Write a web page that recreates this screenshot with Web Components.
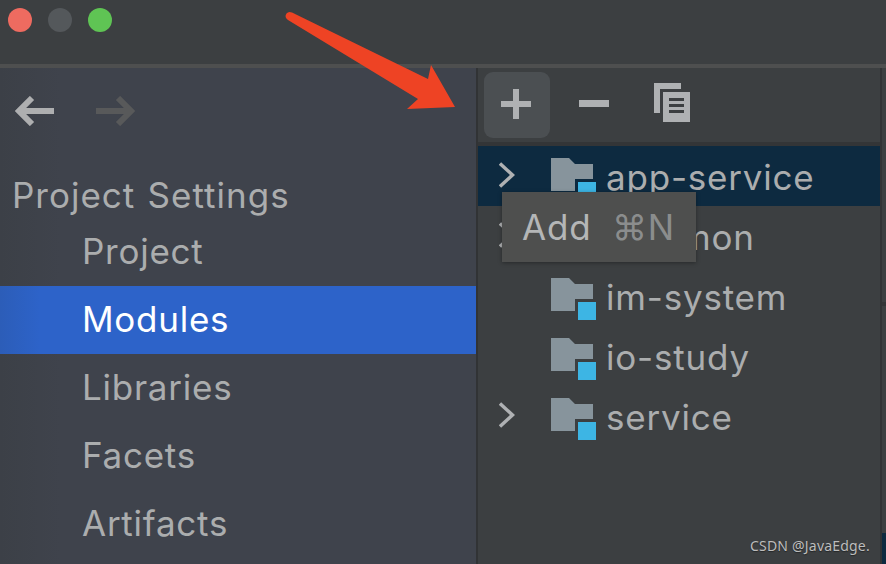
<!DOCTYPE html>
<html>
<head>
<meta charset="utf-8">
<title>Project Structure</title>
<style>
    html, body { margin: 0; height: 100%; background: #3c3f41; overflow: hidden; }
    body { font-family: Inter, "Liberation Sans", sans-serif; }
</style>
</head>
<body>
<ide-window>
    <ide-sidebar slot="side">
        <side-item>Project</side-item>
        <side-item selected>Modules</side-item>
        <side-item>Libraries</side-item>
        <side-item>Facets</side-item>
        <side-item>Artifacts</side-item>
    </ide-sidebar>
    <module-toolbar slot="main"></module-toolbar>
    <module-row slot="main" selected expandable>app-service</module-row>
    <module-row slot="main" expandable>common</module-row>
    <module-row slot="main">im-system</module-row>
    <module-row slot="main">io-study</module-row>
    <module-row slot="main" expandable>service</module-row>
    <hover-tip slot="main" shortcut="⌘N">Add</hover-tip>
    <red-arrow slot="over"></red-arrow>
    <water-mark slot="over">CSDN @JavaEdge.</water-mark>
</ide-window>

<script>
class IdeWindow extends HTMLElement {
    constructor() {
        super();
        this.attachShadow({ mode: 'open' });
        this.shadowRoot.innerHTML = `
            <style>
                :host {
                    display: flex;
                    flex-direction: column;
                    position: relative;
                    width: 886px;
                    height: 564px;
                    overflow: hidden;
                    background: #3c3f41;
                }
                .titlebar {
                    height: 64px;
                    flex: none;
                    box-sizing: border-box;
                    padding: 8px 8px;
                    display: flex;
                    gap: 16px;
                }
                .light { width: 24px; height: 24px; border-radius: 50%; }
                .red { background: #ee6b60; }
                .grey { background: #54585b; }
                .green { background: #5fc454; }
                .rule { height: 4px; flex: none; background: #4e4f4f; }
                .body { flex: 1; display: flex; min-height: 0; }
                .main {
                    flex: none;
                    width: 402px;
                    border-left: 2px solid #313335;
                    border-right: 2px solid #313335;
                    display: flex;
                    flex-direction: column;
                    position: relative;
                }
                .strip { flex: 1; display: flex; flex-direction: column; }
                .strip .a { height: 234px; flex: none; }
                .strip .b { height: 4px; flex: none; background: #333537; }
                .strip .c { height: 227px; flex: none; }
                .strip .d { flex: 1; background: #0d2a40; }
            </style>
            <div class="titlebar">
                <div class="light red"></div>
                <div class="light grey"></div>
                <div class="light green"></div>
            </div>
            <div class="rule"></div>
            <div class="body">
                <slot name="side"></slot>
                <div class="main"><slot name="main"></slot></div>
                <div class="strip">
                    <div class="a"></div><div class="b"></div><div class="c"></div><div class="d"></div>
                </div>
            </div>
            <slot name="over"></slot>
        `;
    }
}

class IdeSidebar extends HTMLElement {
    constructor() {
        super();
        this.attachShadow({ mode: 'open' });
        this.shadowRoot.innerHTML = `
            <style>
                :host {
                    display: flex;
                    flex-direction: column;
                    flex: none;
                    width: 476px;
                    background: linear-gradient(90deg, #3c4047 0, #3f434c 60px);
                }
                .nav {
                    height: 84px;
                    flex: none;
                    display: flex;
                    gap: 42px;
                    padding: 28px 0 0 15px;
                    box-sizing: border-box;
                }
                svg { display: block; }
                h2 {
                    margin: 0;
                    height: 66px;
                    flex: none;
                    box-sizing: border-box;
                    padding: 23px 0 0 12px;
                    font: 400 35px/40px Inter, "Liberation Sans", sans-serif;
                    letter-spacing: 1px;
                    word-spacing: 1.5px;
                    color: #abadae;
                    white-space: nowrap;
                }
            </style>
            <div class="nav">
                <svg width="39" height="30" viewBox="0 0 39 30" fill="none" stroke="#aeafb0" stroke-width="6">
                    <path d="M39 15H4M17 2L4 15l13 13"/>
                </svg>
                <svg width="39" height="30" viewBox="0 0 39 30" fill="none" stroke="#58595a" stroke-width="6">
                    <path d="M0 15h35M22 2l13 13-13 13"/>
                </svg>
            </div>
            <h2>Project Settings</h2>
            <slot></slot>
        `;
    }
}

class SideItem extends HTMLElement {
    constructor() {
        super();
        this.attachShadow({ mode: 'open' });
        this.shadowRoot.innerHTML = `
            <style>
                :host {
                    display: flex;
                    align-items: center;
                    box-sizing: border-box;
                    height: 68px;
                    padding: 0 0 2px 82px;
                    font: 400 35px/40px Inter, "Liberation Sans", sans-serif;
                    letter-spacing: 0.75px;
                    color: #abadae;
                    white-space: nowrap;
                }
                :host([selected]) {
                    color: #fff;
                    background: linear-gradient(90deg, #2c5db8 0, #2d63c9 40px);
                }
            </style>
            <slot></slot>
        `;
    }
}

class ModuleToolbar extends HTMLElement {
    constructor() {
        super();
        this.attachShadow({ mode: 'open' });
        this.shadowRoot.innerHTML = `
            <style>
                :host {
                    display: flex;
                    align-items: center;
                    flex: none;
                    height: 74px;
                    border-bottom: 4px solid #333537;
                    padding-left: 6px;
                }
                .btn {
                    width: 66px;
                    height: 66px;
                    display: flex;
                    align-items: center;
                    justify-content: center;
                    border-radius: 9px;
                    flex: none;
                }
                .hover { background: #4b4f52; }
                svg { display: block; }
                .hover svg, .minus svg { margin: -2px 2px 0 0; }
                .minus { margin-left: 12px; }
                .copy { margin-left: 11px; }
                .copy svg { margin-top: -5px; }
            </style>
            <div class="btn hover">
                <svg width="30" height="30" viewBox="0 0 30 30" fill="#afb1b3"><path d="M12 0h6v12h12v6H18v12h-6V18H0v-6h12z"/></svg>
            </div>
            <div class="btn minus">
                <svg width="30" height="30" viewBox="0 0 30 30" fill="#afb1b3"><rect y="11" width="30" height="7"/></svg>
            </div>
            <div class="btn copy">
                <svg width="36" height="39" viewBox="0 0 36 39" fill="#afb1b3">
                    <path d="M0 0h27v6H6v24H0z"/>
                    <path fill-rule="evenodd" d="M9 9h27v30H9zM15 15v3h15v-3zM15 21v3h15v-3zM15 27v3h15v-3z"/>
                </svg>
            </div>
        `;
    }
}

class ModuleRow extends HTMLElement {
    constructor() {
        super();
        this.attachShadow({ mode: 'open' });
        this.shadowRoot.innerHTML = `
            <style>
                :host {
                    display: flex;
                    align-items: center;
                    flex: none;
                    height: 60px;
                    font: 400 35px/40px Inter, "Liberation Sans", sans-serif;
                    letter-spacing: 0.8px;
                    color: #abadae;
                    white-space: nowrap;
                }
                :host([selected]) { background: #0d2a40; }
                .chev { width: 16px; height: 26px; margin: -2px 0 0 21px; flex: none; }
                :host(:not([expandable])) .chev { visibility: hidden; }
                .folder { width: 45px; height: 42px; margin: 6px 0 0 36px; flex: none; }
                .label { margin: 2px 0 0 10px; }
                svg { display: block; }
            </style>
            <svg class="chev" viewBox="0 0 16 26" fill="none" stroke="#afb1b3" stroke-width="3.4"><path d="M1 1.5L13.5 13 1 24.5"/></svg>
            <svg class="folder" viewBox="0 0 45 42">
                <path fill="#87949c" d="M0 0h18l6 6h18v15H24v12H0z"/>
                <rect x="27" y="24" width="18" height="18" fill="#3db5e4"/>
            </svg>
            <span class="label"><slot></slot></span>
        `;
    }
}

class HoverTip extends HTMLElement {
    constructor() {
        super();
        this.attachShadow({ mode: 'open' });
        this.shadowRoot.innerHTML = `
            <style>
                :host {
                    position: absolute;
                    left: 24px;
                    top: 124px;
                    width: 194px;
                    height: 70px;
                    box-sizing: border-box;
                    display: flex;
                    align-items: center;
                    padding: 0 0 0 20px;
                    background: #4e4f4e;
                    box-shadow: 0 1px 4px rgba(0,0,0,0.35);
                    font: 400 35px/40px Inter, "Liberation Sans", sans-serif;
                    letter-spacing: 0.8px;
                    color: #b4b6b7;
                    white-space: nowrap;
                }
                .key { position: absolute; left: 110px; color: #8b8d8d; }
            </style>
            <slot></slot><span class="key"></span>
        `;
        this.shadowRoot.querySelector('.key').textContent = this.getAttribute('shortcut') || '';
    }
}

class RedArrow extends HTMLElement {
    constructor() {
        super();
        this.attachShadow({ mode: 'open' });
        this.shadowRoot.innerHTML = `
            <style>
                :host { position: absolute; left: 280px; top: 8px; width: 180px; height: 106px; }
                svg { display: block; }
            </style>
            <svg width="180" height="106" viewBox="280 8 180 106">
                <path fill="#ee4324" d="M286.5 13.5Q288.5 11 292 12.5L428 79 431 65 455 107 407 109 418 99 288 20Q284 17 286.5 13.5z"/>
            </svg>
        `;
    }
}

class WaterMark extends HTMLElement {
    constructor() {
        super();
        this.attachShadow({ mode: 'open' });
        this.shadowRoot.innerHTML = `
            <style>
                :host {
                    position: absolute;
                    left: 750px;
                    top: 537px;
                    font: 400 14px/18px "Noto Sans", "DejaVu Sans", sans-serif;
                    letter-spacing: 0.2px;
                    color: #bdbdbd;
                    text-shadow: 0 1px 1px rgba(0,0,0,0.4);
                    white-space: nowrap;
                }
            </style>
            <slot></slot>
        `;
    }
}

customElements.define('ide-window', IdeWindow);
customElements.define('ide-sidebar', IdeSidebar);
customElements.define('side-item', SideItem);
customElements.define('module-toolbar', ModuleToolbar);
customElements.define('module-row', ModuleRow);
customElements.define('hover-tip', HoverTip);
customElements.define('red-arrow', RedArrow);
customElements.define('water-mark', WaterMark);
</script>
</body>
</html>
